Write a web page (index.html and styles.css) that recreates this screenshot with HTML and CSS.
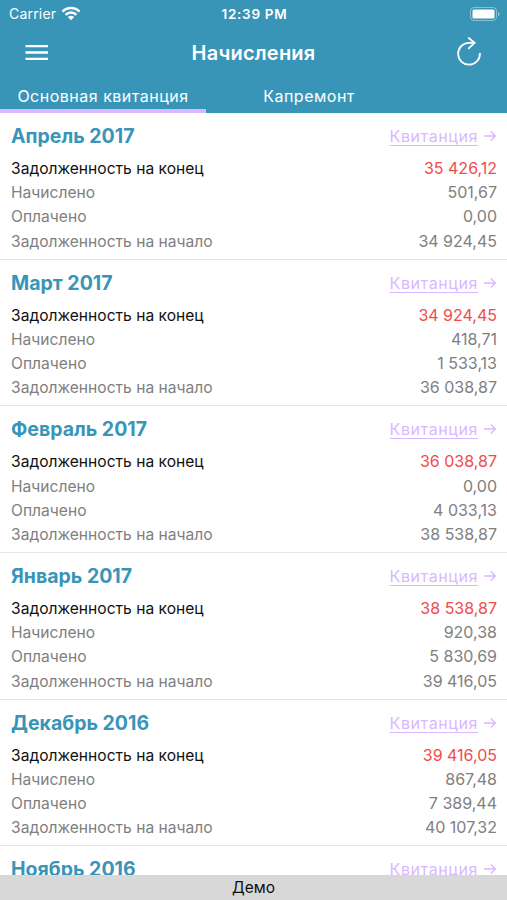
FILE: index.html
```html
<!DOCTYPE html>
<html lang="ru">
  <head>
    <meta charset="UTF-8" />
    <meta name="viewport" content="width=device-width, initial-scale=1.0" />
    <title>Начисления</title>
    <link rel="stylesheet" href="styles.css">
  </head>
  <body>
    <header>
      <div class="status">
        <div class="carrier">
          Carrier
          <svg width="20" height="15" viewBox="0 0 20 15" fill="none" stroke="#fff" stroke-width="2.6">
            <path d="M1.5 5.6a12 12 0 0 1 17 0M4.6 8.8a7.6 7.6 0 0 1 10.8 0" />
            <path d="M10 14.2L6.9 11.1a4.4 4.4 0 0 1 6.2 0z" fill="#fff" stroke="none" />
          </svg>
        </div>
        <div class="time">12:39 PM</div>
        <div class="battery">
          <svg width="30" height="14" viewBox="0 0 30 14">
            <rect x=".5" y=".5" width="26" height="13" rx="3.5" fill="none" stroke="#fff" stroke-opacity=".4" />
            <rect x="2.5" y="2.5" width="22" height="9" rx="1.5" fill="#fff" />
            <path d="M28 4.8q1.6.7 1.6 2.2T28 9.2z" fill="#fff" fill-opacity=".45" />
          </svg>
        </div>
      </div>
      <div class="navbar">
        <button type="button" aria-label="Меню">
          <svg width="24" height="18" viewBox="0 0 24 18" stroke="#fff" stroke-width="2.3">
            <path d="M.5 2.2h22.5M.5 8.5h22.5M.5 14.8h22.5" />
          </svg>
        </button>
        <h1>Начисления</h1>
        <button type="button" aria-label="Обновить">
          <svg width="26" height="32" viewBox="0 0 26 32" fill="none" stroke="#fff" stroke-width="1.8">
            <path d="M18.6 5.9H13A10.9 10.9 0 1 0 23.9 16" />
            <path d="M12.2 .5l6.4 5.4-6.4 6" />
          </svg>
        </button>
      </div>
      <nav class="tabs">
        <a class="tab active">Основная квитанция</a>
        <a class="tab">Капремонт</a>
      </nav>
    </header>

    <main>
      <section class="month">
        <div class="month-head">
          <h2>Апрель 2017</h2>
          <a class="receipt"><u>Квитанция</u> <svg width="14" height="12" viewBox="0 0 14 12"><path d="M.8 6h11.6M7.8 1.4L12.4 6l-4.6 4.6" /></svg></a>
        </div>
        <dl>
          <div class="row debt"><dt>Задолженность на конец</dt><dd>35 426,12</dd></div>
          <div class="row"><dt>Начислено</dt><dd>501,67</dd></div>
          <div class="row"><dt>Оплачено</dt><dd>0,00</dd></div>
          <div class="row"><dt>Задолженность на начало</dt><dd>34 924,45</dd></div>
        </dl>
      </section>

      <section class="month">
        <div class="month-head">
          <h2>Март 2017</h2>
          <a class="receipt"><u>Квитанция</u> <svg width="14" height="12" viewBox="0 0 14 12"><path d="M.8 6h11.6M7.8 1.4L12.4 6l-4.6 4.6" /></svg></a>
        </div>
        <dl>
          <div class="row debt"><dt>Задолженность на конец</dt><dd>34 924,45</dd></div>
          <div class="row"><dt>Начислено</dt><dd>418,71</dd></div>
          <div class="row"><dt>Оплачено</dt><dd>1 533,13</dd></div>
          <div class="row"><dt>Задолженность на начало</dt><dd>36 038,87</dd></div>
        </dl>
      </section>

      <section class="month">
        <div class="month-head">
          <h2>Февраль 2017</h2>
          <a class="receipt"><u>Квитанция</u> <svg width="14" height="12" viewBox="0 0 14 12"><path d="M.8 6h11.6M7.8 1.4L12.4 6l-4.6 4.6" /></svg></a>
        </div>
        <dl>
          <div class="row debt"><dt>Задолженность на конец</dt><dd>36 038,87</dd></div>
          <div class="row"><dt>Начислено</dt><dd>0,00</dd></div>
          <div class="row"><dt>Оплачено</dt><dd>4 033,13</dd></div>
          <div class="row"><dt>Задолженность на начало</dt><dd>38 538,87</dd></div>
        </dl>
      </section>

      <section class="month">
        <div class="month-head">
          <h2>Январь 2017</h2>
          <a class="receipt"><u>Квитанция</u> <svg width="14" height="12" viewBox="0 0 14 12"><path d="M.8 6h11.6M7.8 1.4L12.4 6l-4.6 4.6" /></svg></a>
        </div>
        <dl>
          <div class="row debt"><dt>Задолженность на конец</dt><dd>38 538,87</dd></div>
          <div class="row"><dt>Начислено</dt><dd>920,38</dd></div>
          <div class="row"><dt>Оплачено</dt><dd>5 830,69</dd></div>
          <div class="row"><dt>Задолженность на начало</dt><dd>39 416,05</dd></div>
        </dl>
      </section>

      <section class="month">
        <div class="month-head">
          <h2>Декабрь 2016</h2>
          <a class="receipt"><u>Квитанция</u> <svg width="14" height="12" viewBox="0 0 14 12"><path d="M.8 6h11.6M7.8 1.4L12.4 6l-4.6 4.6" /></svg></a>
        </div>
        <dl>
          <div class="row debt"><dt>Задолженность на конец</dt><dd>39 416,05</dd></div>
          <div class="row"><dt>Начислено</dt><dd>867,48</dd></div>
          <div class="row"><dt>Оплачено</dt><dd>7 389,44</dd></div>
          <div class="row"><dt>Задолженность на начало</dt><dd>40 107,32</dd></div>
        </dl>
      </section>

      <section class="month">
        <div class="month-head">
          <h2>Ноябрь 2016</h2>
          <a class="receipt"><u>Квитанция</u> <svg width="14" height="12" viewBox="0 0 14 12"><path d="M.8 6h11.6M7.8 1.4L12.4 6l-4.6 4.6" /></svg></a>
        </div>
      </section>
    </main>

    <footer>Демо</footer>
  </body>
</html>
```
FILE: styles.css
```css
* {
  box-sizing: border-box;
}
body {
  margin: 0;
  height: 100vh;
  display: flex;
  flex-direction: column;
  overflow: hidden;
  font-family: Inter, "Liberation Sans", sans-serif;
  font-size: 16px;
  color: #808080;
  background-color: #fff;
}
header {
  flex: none;
  height: 113px;
  color: #fff;
  background-color: #3995b8;
}
.status {
  display: grid;
  grid-template-columns: 1fr auto 1fr;
  align-items: center;
  height: 27px;
  padding: 0 7px 0 9px;
  font-size: 14px;
}
.carrier {
  display: flex;
  align-items: center;
  gap: 5px;
  letter-spacing: 0.2px;
}
.time {
  font-weight: 600;
  font-size: 13.5px;
  letter-spacing: 0.7px;
}
.battery {
  display: flex;
  justify-content: flex-end;
}
.navbar {
  display: flex;
  align-items: center;
  justify-content: space-between;
  height: 51px;
  padding: 0 25px;
}
.navbar button {
  display: flex;
  padding: 0;
  border: 0;
  background: none;
}
h1 {
  margin: 0;
  padding-left: 2px;
  font-size: 20px;
  font-weight: 600;
  letter-spacing: 0.2px;
}
.tabs {
  display: flex;
  height: 35px;
}
.tab {
  width: 206px;
  line-height: 37px;
  letter-spacing: 0.5px;
  text-align: center;
}
.tab.active {
  border-bottom: 4px solid #d9b8ff;
}
main {
  flex: 1;
  min-height: 0;
  overflow: hidden;
}
.month {
  height: 146.67px;
  padding: 8px 10px 0 11px;
  border-bottom: 1px solid #e6e6e6;
}
.month-head,
.row {
  display: flex;
  justify-content: space-between;
}
.month-head {
  align-items: center;
  height: 30px;
  margin-bottom: 5px;
}
h2 {
  margin: 0;
  font-size: 19.5px;
  font-weight: 700;
  color: #3995b8;
}
.receipt {
  display: flex;
  align-items: center;
  gap: 5px;
  color: #d9b8ff;
}
.receipt u {
  letter-spacing: 0.6px;
  text-underline-offset: 3px;
  text-decoration-skip-ink: none;
}
.receipt svg {
  fill: none;
  stroke: currentColor;
  stroke-width: 1.4;
}
dl,
dd {
  margin: 0;
}
.row {
  align-items: baseline;
  height: 24.2px;
  line-height: 24px;
}
dt {
  font-size: 15.6px;
}
.debt dt {
  color: #111;
}
.debt dd {
  color: #f04b4b;
}
footer {
  flex: none;
  height: 25px;
  line-height: 25px;
  font-size: 15.5px;
  text-align: center;
  color: #111;
  background-color: #d8d8d8;
}
```
